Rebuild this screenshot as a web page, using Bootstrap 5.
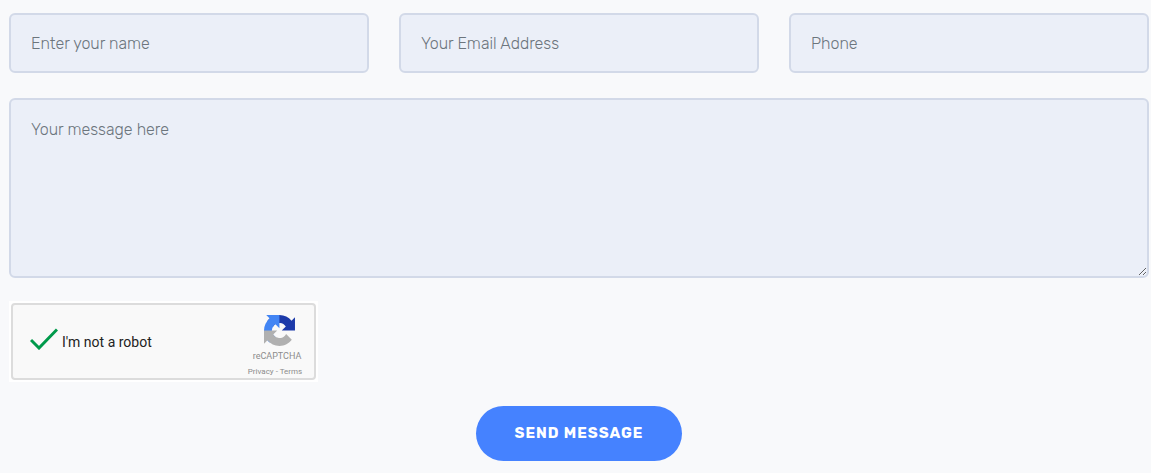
<!DOCTYPE html>
<html lang="en">
<head>
<meta charset="utf-8">
<meta name="viewport" content="width=device-width, initial-scale=1">
<title>Contact</title>
<link rel="stylesheet" href="https://cdn.jsdelivr.net/npm/bootstrap@5.3.0/dist/css/bootstrap.min.css">
<style>
  body { background: #f8f9fb; font-family: Rubik, Roboto, sans-serif; }
  .contact-form { padding: 13px 2px 12px 9px; }
  .fields { --bs-gutter-x: 30px; --bs-gutter-y: 25px; }
  .contact-form .form-control {
    height: 60px; padding: 0 20px; border: 2px solid #d2d9e8; border-radius: 6px;
    background: #ebeff8; font-size: 16px; font-weight: 300; line-height: 24px;
  }
  .contact-form .form-control::placeholder { color: #6c757d; }
  .contact-form textarea.form-control { height: 180px; padding-top: 18px; }
  .captcha-frame { width: 309px; margin-top: 23px; padding: 2px; background: #fff; }
  .captcha { height: 77px; padding: 0 10px 0 17px; border: 2px solid #dcdcdc; border-radius: 4px; background: #f9f9f9; font-family: Roboto, sans-serif; }
  .captcha .verify { width: 28px; height: 28px; margin: 0; flex: none; border: 0; border-radius: 0; background-color: transparent; background-position: top; background-size: 28px 22px; }
  .captcha .verify:checked { background-color: transparent; background-image: url("data:image/svg+xml,%3Csvg xmlns='http://www.w3.org/2000/svg' viewBox='0 0 28 22'%3E%3Cpath d='M1 12L9 20L27 1.5' fill='none' stroke='%23009a4b' stroke-width='3'/%3E%3C/svg%3E"); }
  .captcha label { font-size: 14px; line-height: 20px; color: #222; }
  .brand-block { width: 58px; padding-top: 10px; color: #8c8c8c; }
  .brand-logo { padding-left: 8px; }
  .brand-name { font-size: 9px; line-height: 12px; margin-top: 4px; padding-left: 4px; }
  .brand-links { font-size: 8px; line-height: 12px; margin-top: 4px; }
  .brand-links a { color: inherit; text-decoration: none; }
  .send { height: 55px; padding: 0 39px; border: 0; border-radius: 28px; background: #4582ff; color: #fff; font-size: 15px; font-weight: 700; letter-spacing: 1px; margin-top: 24px; }
</style>
</head>
<body>
<form class="contact-form container-fluid">
  <div class="row fields">
    <div class="col-4"><input class="form-control" type="text" placeholder="Enter your name" aria-label="Enter your name"></div>
    <div class="col-4"><input class="form-control" type="email" placeholder="Your Email Address" aria-label="Your Email Address"></div>
    <div class="col-4"><input class="form-control" type="tel" placeholder="Phone" aria-label="Phone"></div>
    <div class="col-12"><textarea class="form-control d-block" placeholder="Your message here" aria-label="Your message here"></textarea></div>
  </div>
  <div class="captcha-frame">
    <div class="captcha d-flex align-items-center">
      <input class="form-check-input verify" type="checkbox" id="robot" checked>
      <label class="ms-1 me-auto" for="robot">I'm not a robot</label>
      <div class="brand-block text-center">
        <div class="brand-logo">
        <svg class="d-block mx-auto" width="31" height="31" viewBox="0 0 64 64" aria-hidden="true">
          <path fill="#1c3aa9" d="M64 31.955l-.033-1.37V4.687l-7.16 7.16C50.948 4.674 42.033.093 32.05.093c-10.4 0-19.622 4.96-25.458 12.64l11.736 11.86a15.55 15.55 0 0 1 4.754-5.334c2.05-1.6 4.952-2.906 8.968-2.906.485 0 .86.057 1.135.163 4.976.393 9.288 3.14 11.828 7.124l-8.307 8.307L64 31.953"/>
          <path fill="#4285f4" d="M31.862.094l-1.37.033H4.594l7.16 7.16C4.58 13.147 0 22.06 0 32.046c0 10.4 4.96 19.622 12.64 25.458L24.5 45.768a15.55 15.55 0 0 1-5.334-4.754c-1.6-2.05-2.906-4.952-2.906-8.968 0-.485.057-.86.163-1.135.393-4.976 3.14-9.288 7.124-11.828l8.307 8.307L31.86.095"/>
          <path fill="#b0b0b0" d="M.001 32.045l.033 1.37v25.898l7.16-7.16c5.86 7.173 14.774 11.754 24.76 11.754 10.4 0 19.622-4.96 25.458-12.64l-11.736-11.86a15.55 15.55 0 0 1-4.754 5.334c-2.05 1.6-4.952 2.906-8.968 2.906-.485 0-.86-.057-1.135-.163-4.976-.393-9.288-3.14-11.828-7.124l8.307-8.307c-10.522.04-22.4.066-27.295-.005"/>
        </svg>
        </div>
        <div class="brand-name">reCAPTCHA</div>
        <div class="brand-links text-nowrap"><a href="#">Privacy</a> - <a href="#">Terms</a></div>
      </div>
    </div>
  </div>
  <div class="text-center"><button class="btn send" type="submit">SEND MESSAGE</button></div>
</form>
<script src="https://cdn.jsdelivr.net/npm/bootstrap@5.3.0/dist/js/bootstrap.bundle.min.js"></script>
</body>
</html>
